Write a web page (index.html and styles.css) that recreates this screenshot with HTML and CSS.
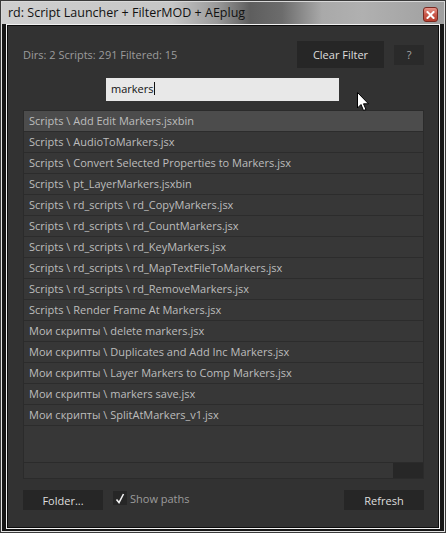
FILE: index.html
```html
<!DOCTYPE html>
<html lang="en">

<head>
    <meta charset="UTF-8">
    <title>rd: Script Launcher + FilterMOD + AEplug</title>
    <link rel="stylesheet" href="styles.css">
</head>

<body>

    <div class="window">
        <div class="titlebar">
            <span class="title">rd: Script Launcher + FilterMOD + AEplug</span>
            <span class="close-btn">
                <svg width="9" height="8" viewBox="0 0 9 8">
                    <path d="M1.5 1 L7.5 7 M7.5 1 L1.5 7" stroke="#fff" stroke-width="2" stroke-linecap="square" />
                </svg>
            </span>
        </div>
        <div class="frame">
            <div class="panel">
                <div class="panel-inner">

                    <div class="top-row">
                        <span class="stats">Dirs: 2 Scripts: 291 Filtered: 15</span>
                        <button class="btn btn-clear">Clear Filter</button>
                        <button class="btn btn-help">?</button>
                    </div>

                    <div class="search-row">
                        <div class="search-box">markers<span class="caret"></span></div>
                        <svg class="pointer" width="13" height="20" viewBox="0 0 13 20">
                            <path d="M0.5 0.5 L0.5 16 L4 12.5 L6.5 18.5 L9 17.5 L6.5 11.8 L11.5 11.8 Z" fill="#fff" stroke="#000" stroke-width="1" stroke-linejoin="miter" />
                        </svg>
                    </div>

                    <div class="list">
                        <div class="rows">
                            <div class="row selected">Scripts \ Add Edit Markers.jsxbin</div>
                            <div class="row">Scripts \ AudioToMarkers.jsx</div>
                            <div class="row">Scripts \ Convert Selected Properties to Markers.jsx</div>
                            <div class="row">Scripts \ pt_LayerMarkers.jsxbin</div>
                            <div class="row">Scripts \ rd_scripts \ rd_CopyMarkers.jsx</div>
                            <div class="row">Scripts \ rd_scripts \ rd_CountMarkers.jsx</div>
                            <div class="row">Scripts \ rd_scripts \ rd_KeyMarkers.jsx</div>
                            <div class="row">Scripts \ rd_scripts \ rd_MapTextFileToMarkers.jsx</div>
                            <div class="row">Scripts \ rd_scripts \ rd_RemoveMarkers.jsx</div>
                            <div class="row">Scripts \ Render Frame At Markers.jsx</div>
                            <div class="row">Мои скрипты \ delete markers.jsx</div>
                            <div class="row">Мои скрипты \ Duplicates and Add Inc Markers.jsx</div>
                            <div class="row">Мои скрипты \ Layer Markers to Comp Markers.jsx</div>
                            <div class="row">Мои скрипты \ markers save.jsx</div>
                            <div class="row">Мои скрипты \ SplitAtMarkers_v1.jsx</div>
                        </div>
                        <div class="hscroll">
                            <div class="hscroll-track"></div>
                            <div class="hscroll-corner"></div>
                        </div>
                    </div>

                    <div class="bottom-row">
                        <button class="btn btn-folder">Folder...</button>
                        <label class="check">
                            <span class="check-box">
                                <svg width="10" height="11" viewBox="0 0 10 11">
                                    <path d="M1.5 6.5 L4 9.5 L8.5 1" fill="none" stroke="#f2f2f2" stroke-width="1.6" />
                                </svg>
                            </span>
                            Show paths
                        </label>
                        <button class="btn btn-refresh">Refresh</button>
                    </div>

                </div>
            </div>
        </div>
    </div>

</body>

</html>
```

FILE: styles.css
```css
body {
    margin: 0;
    background: #1a1a1a;
    font-family: 'Open Sans', 'Noto Sans', sans-serif;
    font-size: 11px;
}

.window {
    width: 446px;
    height: 533px;
    box-sizing: border-box;
    border: 1px solid #3a3a3a;
    background: #141414;
    display: flex;
    flex-direction: column;
}

/* glassy title bar */
.titlebar {
    height: 22px;
    flex: none;
    display: flex;
    align-items: flex-start;
    padding: 0 6px 0 6px;
    border: 1px solid #d8d8d8;
    border-bottom: none;
    background: linear-gradient(to right, #cfcfcf 0, #c6c6c6 170px, #9a9a9a 215px, #5e5e5e 248px, #6c6c6c 280px, #a9a9a9 320px, #b0b0b0 360px, #9f9f9f 446px);
}

.title {
    color: #111;
    font-size: 12.5px;
    line-height: 21px;
}

.close-btn {
    margin-left: auto;
    margin-top: 5px;
    width: 15px;
    height: 15px;
    box-sizing: border-box;
    border: 1px solid #7a2a22;
    border-radius: 3px;
    background: linear-gradient(#e8968a, #c9584a 50%, #b8402f);
    display: flex;
    align-items: center;
    justify-content: center;
}

.frame {
    flex: 1;
    display: flex;
    border: 1px solid #e4e4e4;
    border-top: none;
    padding: 0 4px 2px 4px;
    background: #161616;
}

.panel {
    flex: 1;
    display: flex;
    border: 1px solid #f2f2f2;
}

.panel-inner {
    flex: 1;
    display: flex;
    flex-direction: column;
    border: 1px solid #0c0c0c;
    background: #323232;
    padding: 15px 14px 0 15px;
}

.top-row {
    display: flex;
    align-items: center;
    height: 27px;
}

.stats {
    color: #9c9c9c;
}

.btn {
    border: none;
    background: #262626;
    color: #dedede;
    font-family: inherit;
    font-size: 11px;
    padding: 0;
    cursor: pointer;
}

.btn-clear {
    margin-left: auto;
    width: 87px;
    height: 27px;
}

.btn-help {
    margin-left: 10px;
    width: 30px;
    height: 20px;
    background: #2a2a2a;
    color: #a8a8a8;
}

.search-row {
    position: relative;
    margin-top: 10px;
    height: 23px;
}

.search-box {
    margin-left: 83px;
    width: 233px;
    height: 23px;
    box-sizing: border-box;
    padding: 0 5px;
    background: #e8e8e8;
    color: #111;
    line-height: 22px;
}

.caret {
    display: inline-block;
    width: 1px;
    height: 13px;
    background: #111;
    vertical-align: -2px;
}

.pointer {
    position: absolute;
    left: 334px;
    top: 14px;
}

.list {
    height: 369px;
    box-sizing: border-box;
    margin-top: 9px;
    display: flex;
    flex-direction: column;
    border: 1px solid #2b2b2b;
    background: #373737;
}

.rows {
    flex: 1;
}

.row {
    height: 20px;
    line-height: 20px;
    padding-left: 5px;
    border-bottom: 1px solid #2c2c2c;
    color: #bdbdbd;
    white-space: nowrap;
}

.row.selected {
    background: #4c4c4c;
}

.hscroll {
    height: 15px;
    display: flex;
    border-top: 1px solid #2b2b2b;
}

.hscroll-track {
    flex: 1;
    background: #363636;
}

.hscroll-corner {
    width: 30px;
    background: #272727;
}

.bottom-row {
    display: flex;
    align-items: center;
    margin-top: 11px;
    height: 20px;
}

.btn-folder,
.btn-refresh {
    width: 80px;
    height: 20px;
}

.btn-refresh {
    margin-left: auto;
}

.check {
    display: flex;
    align-items: center;
    margin-left: 10px;
    color: #9c9c9c;
    margin-top: -4px;
}

.check-box {
    width: 14px;
    height: 14px;
    margin-right: 3px;
    background: #262626;
    display: flex;
    align-items: center;
    justify-content: center;
}
```
